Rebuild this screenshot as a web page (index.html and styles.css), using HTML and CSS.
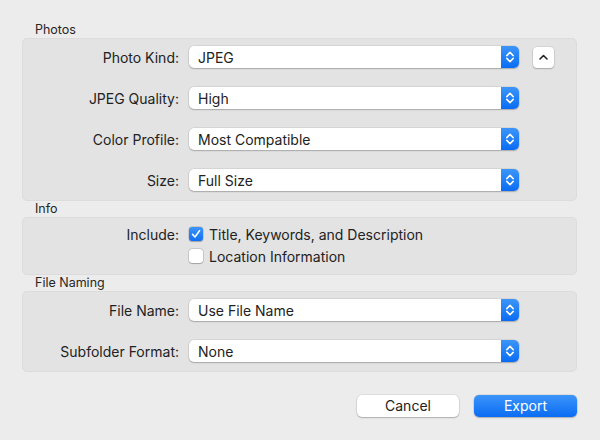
FILE: index.html
```html
<!DOCTYPE html>
<html>
<head>
<meta charset="utf-8">
<link rel="stylesheet" href="styles.css">
</head>
<body>
<div class="dialog">
  <div class="section-label">Photos</div>
  <div class="panel">
    <div class="row">
      <div class="label">Photo Kind:</div>
      <div class="popup"><span class="value">JPEG</span><span class="stepper"><svg width="18" height="22" viewBox="0 0 18 22"><path d="M5.8 9.6 L9 6.4 L12.2 9.6 M5.8 12.4 L9 15.6 L12.2 12.4" fill="none" stroke="#fff" stroke-width="1.5" stroke-linecap="round" stroke-linejoin="round"/></svg></span></div>
      <div class="upbtn"><svg width="21" height="21" viewBox="0 0 21 21"><path d="M7 12 L10.5 8.5 L14 12" fill="none" stroke="#222" stroke-width="1.6" stroke-linecap="round" stroke-linejoin="round"/></svg></div>
    </div>
    <div class="row">
      <div class="label">JPEG Quality:</div>
      <div class="popup"><span class="value">High</span><span class="stepper"><svg width="18" height="22" viewBox="0 0 18 22"><path d="M5.8 9.6 L9 6.4 L12.2 9.6 M5.8 12.4 L9 15.6 L12.2 12.4" fill="none" stroke="#fff" stroke-width="1.5" stroke-linecap="round" stroke-linejoin="round"/></svg></span></div>
    </div>
    <div class="row">
      <div class="label">Color Profile:</div>
      <div class="popup"><span class="value">Most Compatible</span><span class="stepper"><svg width="18" height="22" viewBox="0 0 18 22"><path d="M5.8 9.6 L9 6.4 L12.2 9.6 M5.8 12.4 L9 15.6 L12.2 12.4" fill="none" stroke="#fff" stroke-width="1.5" stroke-linecap="round" stroke-linejoin="round"/></svg></span></div>
    </div>
    <div class="row">
      <div class="label">Size:</div>
      <div class="popup"><span class="value">Full Size</span><span class="stepper"><svg width="18" height="22" viewBox="0 0 18 22"><path d="M5.8 9.6 L9 6.4 L12.2 9.6 M5.8 12.4 L9 15.6 L12.2 12.4" fill="none" stroke="#fff" stroke-width="1.5" stroke-linecap="round" stroke-linejoin="round"/></svg></span></div>
    </div>
  </div>

  <div class="section-label">Info</div>
  <div class="panel panel-info">
    <div class="crow">
      <div class="label">Include:</div>
      <div class="check checked"><svg width="14" height="14" viewBox="0 0 14 14"><path d="M3.6 7.4 L6 10 L10.6 3.6" fill="none" stroke="#fff" stroke-width="1.6" stroke-linecap="round" stroke-linejoin="round"/></svg></div>
      <div class="ctext">Title, Keywords, and Description</div>
    </div>
    <div class="crow">
      <div class="label"></div>
      <div class="check"></div>
      <div class="ctext">Location Information</div>
    </div>
  </div>

  <div class="section-label">File Naming</div>
  <div class="panel">
    <div class="row">
      <div class="label">File Name:</div>
      <div class="popup"><span class="value">Use File Name</span><span class="stepper"><svg width="18" height="22" viewBox="0 0 18 22"><path d="M5.8 9.6 L9 6.4 L12.2 9.6 M5.8 12.4 L9 15.6 L12.2 12.4" fill="none" stroke="#fff" stroke-width="1.5" stroke-linecap="round" stroke-linejoin="round"/></svg></span></div>
    </div>
    <div class="row">
      <div class="label">Subfolder Format:</div>
      <div class="popup"><span class="value">None</span><span class="stepper"><svg width="18" height="22" viewBox="0 0 18 22"><path d="M5.8 9.6 L9 6.4 L12.2 9.6 M5.8 12.4 L9 15.6 L12.2 12.4" fill="none" stroke="#fff" stroke-width="1.5" stroke-linecap="round" stroke-linejoin="round"/></svg></span></div>
    </div>
  </div>

  <div class="buttons">
    <div class="btn">Cancel</div>
    <div class="btn primary">Export</div>
  </div>
</div>
</body>
</html>
```
FILE: styles.css
```css
html, body {
  margin: 0;
  padding: 0;
}
body {
  width: 600px;
  height: 440px;
  background: #ececec;
  font-family: Inter, "Noto Sans", sans-serif;
  font-size: 14px;
  color: #222;
  overflow: hidden;
}
.dialog {
  padding: 22px 23px 0 22px;
  display: flex;
  flex-direction: column;
}
.section-label {
  height: 16px;
  line-height: 16px;
  font-size: 12.5px;
  padding-left: 13px;
  color: #262626;
}
.panel {
  background: #e3e3e3;
  border: 1px solid #dcdcdc;
  border-radius: 5px;
  padding: 7px 0 9px 0;
  display: flex;
  flex-direction: column;
  gap: 19px;
}
.panel-info {
  padding: 5px 0 7px 0;
  gap: 0;
}
.row, .crow {
  display: flex;
  align-items: center;
  height: 22px;
}
.label {
  width: 156px;
  text-align: right;
  flex: none;
}
.popup {
  margin-left: 10px;
  width: 330px;
  height: 22px;
  box-sizing: border-box;
  background: #fff;
  border-radius: 5px;
  box-shadow: 0 0 0 0.5px rgba(0,0,0,0.12), 0 1px 1.5px rgba(0,0,0,0.22);
  display: flex;
  align-items: center;
  overflow: hidden;
}
.value {
  flex: 1;
  padding-left: 9px;
}
.stepper {
  width: 18px;
  height: 22px;
  background: linear-gradient(#3c95f9, #0a6cf3);
  display: flex;
}
.upbtn {
  margin-left: 14px;
  width: 21px;
  height: 21px;
  background: #fff;
  border-radius: 4px;
  box-shadow: 0 0 0 0.5px rgba(0,0,0,0.12), 0 1px 1.5px rgba(0,0,0,0.22);
  display: flex;
}
.check {
  margin-left: 10px;
  width: 14px;
  height: 14px;
  box-sizing: border-box;
  border-radius: 3px;
  background: #fff;
  box-shadow: 0 0 0 0.5px rgba(0,0,0,0.2), 0 0.5px 1px rgba(0,0,0,0.2);
  display: flex;
}
.check.checked {
  background: linear-gradient(#3c95f9, #0f70f4);
}
.ctext {
  margin-left: 6px;
}
.buttons {
  margin-top: 23px;
  display: flex;
  justify-content: flex-end;
  gap: 15px;
}
.btn {
  width: 102px;
  height: 22px;
  line-height: 22px;
  text-align: center;
  background: #fff;
  border-radius: 5px;
  box-shadow: 0 0 0 0.5px rgba(0,0,0,0.12), 0 1px 1.5px rgba(0,0,0,0.22);
  color: #222;
}
.btn.primary {
  width: 103px;
  background: linear-gradient(#3c95f9, #0a6cf3);
  color: #fff;
}
```
